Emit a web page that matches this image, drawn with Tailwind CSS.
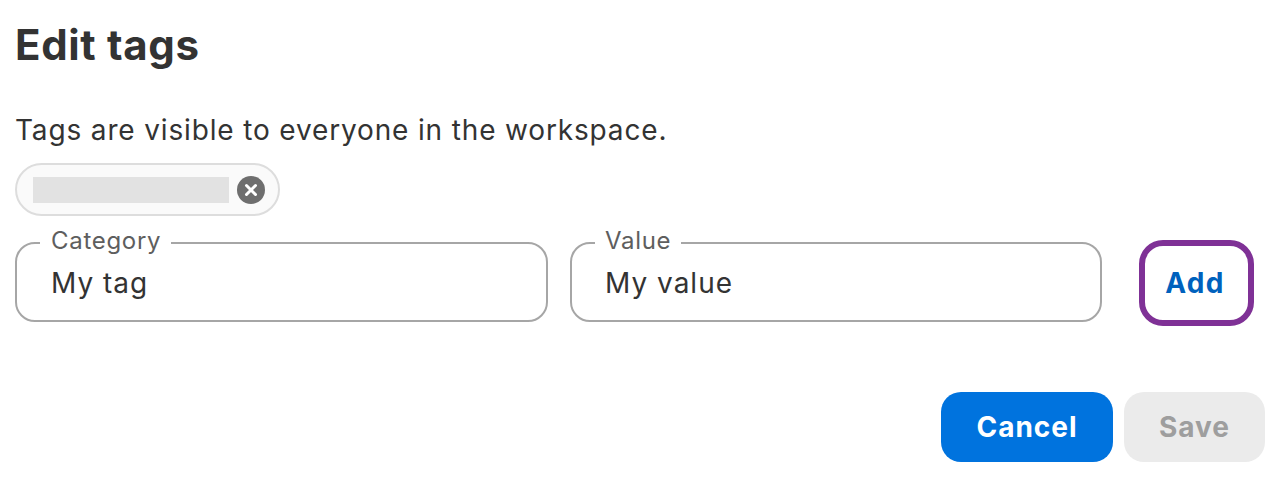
<!DOCTYPE html>
<html lang="en">
<head>
    <meta charset="UTF-8">
    <title>Edit tags</title>
    <script src="https://cdn.jsdelivr.net/npm/@tailwindcss/browser@4"></script>
</head>
<body class="bg-white font-['Inter',sans-serif] text-[#333]">
<div class="flex flex-col w-[1286px] h-[488px] overflow-hidden pl-[15px] pr-[21px]">
    <!-- Title -->
    <h1 class="text-[42px] leading-[50px] font-bold tracking-[0.65px] mt-[20px]">Edit tags</h1>
    <p class="text-[28px] leading-[36px] tracking-[0.85px] mt-[42px]">Tags are visible to everyone in the workspace.</p>

    <!-- Existing tag -->
    <div class="flex items-center w-[265px] h-[53px] mt-[15px] pl-[16px] border-2 border-[#ddd] rounded-full bg-[#fafafa]">
        <div class="w-[196px] h-[26px] mt-[1px] bg-[#e2e2e2]"></div>
        <svg class="ml-[8px]" width="28" height="28" viewBox="0 0 28 28">
            <circle cx="14" cy="14" r="14" fill="#6e6e6e"/>
            <path d="M9.5 9.5l9 9M18.5 9.5l-9 9" stroke="#fff" stroke-width="3" stroke-linecap="round"/>
        </svg>
    </div>

    <!-- New tag form -->
    <form class="flex items-start mt-[10px]">
        <fieldset class="w-[533px] h-[96px] px-[23px] border-2 border-[#a6a6a6] rounded-[20px]">
            <legend class="pl-[11px] pr-[10px] pb-[4px] text-[24px] leading-[30px] tracking-[0.7px] text-[#5e5e5e]">Category</legend>
            <div class="pl-[11px] text-[28px] leading-[38px] tracking-[1px] mt-[4px]">My tag</div>
        </fieldset>
        <fieldset class="w-[532px] h-[96px] ml-[22px] px-[23px] border-2 border-[#a6a6a6] rounded-[20px]">
            <legend class="px-[10px] pb-[4px] text-[24px] leading-[30px] tracking-[0.7px] text-[#5e5e5e]">Value</legend>
            <div class="pl-[10px] text-[28px] leading-[38px] tracking-[1px] mt-[4px]">My value</div>
        </fieldset>
        <button type="button" class="w-[115px] h-[86px] ml-[37px] mt-[14px] pr-[3px] border-[6px] border-[#7f3196] rounded-[24px] text-[28px] font-bold tracking-[1.3px] text-[#0061bd]">Add</button>
    </form>

    <!-- Actions -->
    <div class="flex justify-end gap-[11px] mt-[66px]">
        <button type="button" class="w-[172px] h-[70px] rounded-[20px] bg-[#0073de] text-white text-[28px] font-bold tracking-[1px]">Cancel</button>
        <button type="button" class="w-[141px] h-[70px] rounded-[20px] bg-[#ebebeb] text-[#9e9e9e] text-[28px] font-bold tracking-[1px]">Save</button>
    </div>
</div>
</body>
</html>
